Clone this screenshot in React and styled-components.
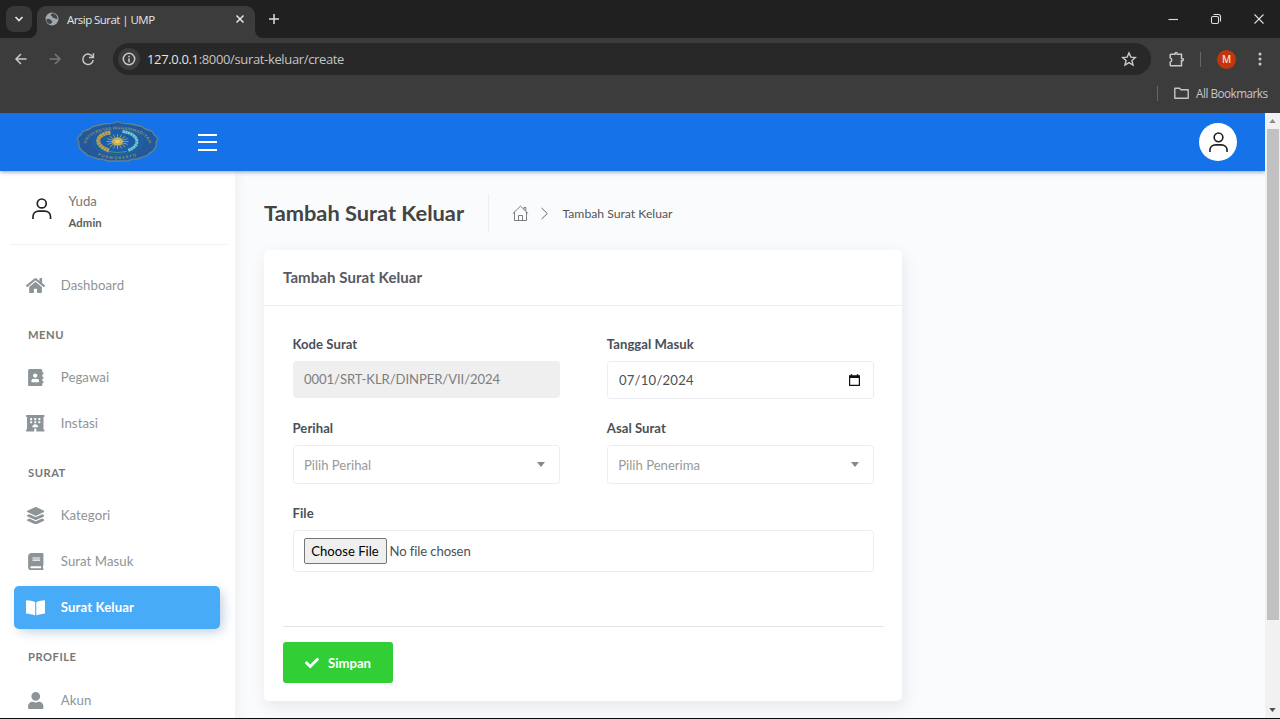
import React from 'react';
import styled, { createGlobalStyle, css } from 'styled-components';
import {
  FaHome,
  FaAddressBook,
  FaHotel,
  FaLayerGroup,
  FaBook,
  FaBookOpen,
  FaUser,
  FaCheck,
} from 'react-icons/fa';

const GlobalStyle = createGlobalStyle`
  * { box-sizing: border-box; }
  html, body { margin: 0; padding: 0; overflow: hidden; }
  body { font-family: Lato, "Liberation Sans", sans-serif; font-size: 13px; color: #575962; }
  svg { display: block; flex: none; }
`;

const Screen = styled.div`
  width: 1280px;
  height: 719px;
  display: flex;
  flex-direction: column;
  overflow: hidden;
  background: #3c3c3c;
  border-bottom: 1px solid #0b0c10;
`;

/* ---------- browser chrome ---------- */

const chromeFont = css`
  font-family: "Open Sans", "Noto Sans", sans-serif;
  white-space: nowrap;
`;

const TabStrip = styled.div`
  height: 38px;
  flex: none;
  display: flex;
  background: #3c3c3c;
`;

const StripLeft = styled.div`
  display: flex;
  width: 37px;
  padding: 6px 0 0 6px;
  background: #202020;
  border-bottom-right-radius: 8px;
`;

const TabSearch = styled.button`
  width: 26px;
  height: 26px;
  border: 0;
  padding: 0;
  border-radius: 8px;
  background: #383838;
  color: #e4e4e4;
  display: flex;
  align-items: center;
  justify-content: center;
`;

const TabBack = styled.div`
  background: linear-gradient(#202020 0 24px, #3c3c3c 24px);
`;

const Tab = styled.div`
  width: 218px;
  height: 32px;
  margin-top: 6px;
  padding: 0 9px 6px 8px;
  display: flex;
  align-items: center;
  background: #3c3c3c;
  border-radius: 9px 9px 0 0;
  color: #e6e6e6;
`;

const TabTitle = styled.span`
  ${chromeFont}
  flex: 1;
  margin-left: 8px;
  font-size: 11.5px;
  letter-spacing: -0.55px;
`;

const StripRight = styled.div`
  flex: 1;
  display: flex;
  align-items: center;
  background: #202020;
  border-bottom-left-radius: 8px;
  color: #dedede;
  padding: 0 15px 0 13px;
  justify-content: space-between;
`;

const WindowControls = styled.div`
  display: flex;
  align-items: center;
  gap: 31px;
`;

const Toolbar = styled.div`
  height: 42px;
  flex: none;
  display: flex;
  align-items: center;
  padding: 0 11px 0 13px;
  color: #c9c9c9;
  background: #3c3c3c;
`;

const NavButtons = styled.div`
  display: flex;
  gap: 17.5px;
  width: 100px;
`;

const AddressBar = styled.div`
  width: 1038px;
  height: 32px;
  border-radius: 16px;
  background: #282828;
  display: flex;
  align-items: center;
  padding: 0 14px 0 5px;
`;

const InfoBadge = styled.span`
  width: 22px;
  height: 22px;
  border-radius: 50%;
  background: #3c3c3c;
  display: flex;
  align-items: center;
  justify-content: center;
`;

const Url = styled.span`
  ${chromeFont}
  flex: 1;
  margin-left: 7px;
  font-size: 13px;
  letter-spacing: -0.35px;
  color: #c4c4c4;
  b { font-weight: 400; color: #e4e4e4; }
`;

const VerticalRule = styled.span`
  flex: none;
  width: 1px;
  height: 15px;
  background: #666;
`;

const ToolbarRight = styled.div`
  display: flex;
  align-items: center;
  padding-left: 17px;
  ${VerticalRule} { margin-left: 15px; }
`;

const Profile = styled.span`
  ${chromeFont}
  width: 19px;
  height: 19px;
  margin: 0 22px 0 16px;
  border-radius: 50%;
  background: #c3350c;
  color: #f5ded7;
  font-size: 10px;
  font-weight: 600;
  display: flex;
  align-items: center;
  justify-content: center;
`;

const BookmarksBar = styled.div`
  ${chromeFont}
  height: 33px;
  flex: none;
  display: flex;
  align-items: center;
  justify-content: flex-end;
  padding: 0 12.5px 7px 0;
  color: #c6c6c6;
  font-size: 11.7px;
  letter-spacing: -0.5px;
`;

const BookmarkFolder = styled.div`
  display: flex;
  align-items: center;
  gap: 7.5px;
  margin-left: 15.5px;
`;

/* ---------- application ---------- */

const Viewport = styled.div`
  flex: 1;
  display: flex;
  min-height: 0;
`;

const Page = styled.div`
  flex: 1;
  display: flex;
  flex-direction: column;
  background: #f9fbfd;
  overflow: hidden;
`;

const Header = styled.header`
  position: relative;
  z-index: 2;
  height: 58px;
  flex: none;
  display: flex;
  align-items: center;
  background: #1572e8;
  box-shadow: 0 1px 4px rgba(21, 60, 120, 0.5);
  padding: 0 28px 0 76px;
`;

const MenuToggle = styled.button`
  display: flex;
  flex-direction: column;
  gap: 5.5px;
  border: 0;
  padding: 0;
  margin: 0 auto 0 39px;
  background: none;
  span { width: 19px; height: 2px; background: #fff; }
`;

const Avatar = styled.div`
  width: 38px;
  height: 38px;
  border-radius: 50%;
  background: #fff;
  display: flex;
  align-items: center;
  justify-content: center;
`;

const Columns = styled.div`
  flex: 1;
  display: flex;
  min-height: 0;
`;

const Sidebar = styled.aside`
  width: 235px;
  flex: none;
  background: #fff;
  box-shadow: 4px 4px 10px rgba(69, 65, 78, 0.06);
  overflow: hidden;
  position: relative;
`;

const UserBox = styled.div`
  display: flex;
  align-items: center;
  height: 74px;
  margin: 0 8px 0 10px;
  padding: 2px 0 0 22px;
  border-bottom: 1px solid #f1f1f1;
`;

const UserText = styled.div`
  display: flex;
  flex-direction: column;
  margin-left: 17px;
  line-height: 22px;
  font-size: 13.2px;
  color: #777;
  padding-top: 6px;
  strong { font-size: 11.3px; font-weight: 700; color: #5c5c5c; letter-spacing: 0.1px; }
`;

const Nav = styled.nav`
  padding: 19px 15px 0 14px;
`;

const SectionTitle = styled.div`
  height: ${(p) => p.$height || 49}px;
  padding: 5px 0 0 14px;
  display: flex;
  align-items: center;
  font-size: 11.2px;
  font-weight: 700;
  letter-spacing: 0.5px;
  color: #777;
`;

const NavItem = styled.a`
  height: 43px;
  display: flex;
  align-items: center;
  padding: 0 0 0 11px;
  border-radius: 5px;
  font-size: 13.2px;
  line-height: 17px;
  color: ${(p) => (p.$active ? '#fff' : '#8d9498')};
  font-weight: ${(p) => (p.$active ? 700 : 400)};
  letter-spacing: ${(p) => (p.$active ? 0.1 : 0.06)}px;
  background: ${(p) => (p.$active ? '#48abf7' : 'transparent')};
  box-shadow: ${(p) => (p.$active ? '4px 4px 10px rgba(0,0,0,.08), 4px 4px 15px -5px rgba(21,114,232,.3)' : 'none')};
  & + & { margin-top: 3px; }
`;

const NavIcon = styled.span`
  width: 21px;
  margin-right: 14.8px;
  display: flex;
  justify-content: center;
`;

const Main = styled.main`
  flex: 1;
  padding: 23px 0 0 29px;
`;

const TitleRow = styled.div`
  display: flex;
  align-items: center;
  height: 38px;
`;

const PageTitle = styled.h1`
  margin: 0;
  width: 224.5px;
  height: 38px;
  line-height: 38px;
  border-right: 1px solid #eceff2;
  font-size: 21.8px;
  font-weight: 700;
  color: #444;
  white-space: nowrap;
`;

const Crumbs = styled.div`
  display: flex;
  align-items: center;
  padding: 1px 0 0 23px;
  font-size: 12.2px;
  color: #555;
  svg + svg { margin-left: 12.5px; }
  span { margin-left: 14.5px; }
`;

const Card = styled.section`
  width: 638px;
  height: 451px;
  margin-top: 18px;
  border-radius: 5px;
  background: #fff;
  box-shadow: 2px 6px 15px rgba(69, 65, 78, 0.1);
`;

const CardHeader = styled.div`
  height: 56px;
  padding: 0 19px;
  border-bottom: 1px solid #ebecec;
  line-height: 54px;
  font-size: 15px;
  font-weight: 700;
  letter-spacing: 0.08px;
  color: #575962;
`;

const Fields = styled.div`
  height: 321px;
  margin: 0 18px 0 19px;
  padding: 28px 10px 0 9.5px;
  border-bottom: 1px solid #e4e5e6;
  display: grid;
  grid-template-columns: 267px 267px;
  column-gap: 47.3px;
  grid-auto-rows: 84.4px;
  align-items: start;
`;

const Field = styled.div`
  grid-column: ${(p) => (p.$wide ? '1 / -1' : 'auto')};
`;

const Label = styled.label`
  display: block;
  height: 27px;
  line-height: 21px;
  font-size: 13.1px;
  font-weight: 700;
  letter-spacing: 0.05px;
  color: #495057;
`;

const Control = styled.div`
  height: ${(p) => p.$height || 38}px;
  padding: 0 ${(p) => (p.$placeholder ? 14 : 13)}px 0 10.5px;
  display: flex;
  align-items: center;
  justify-content: ${(p) => (p.$packed ? 'flex-start' : 'space-between')};
  border: 1px solid ${(p) => (p.$disabled ? '#efefef' : '#ebedf2')};
  border-radius: 3.5px;
  background: ${(p) => (p.$disabled ? '#efefef' : '#fff')};
  color: ${(p) => (p.$disabled ? '#7e7e7e' : p.$placeholder ? '#999' : '#495057')};
  font-size: 13.1px;
  letter-spacing: ${(p) => (p.$disabled ? -0.08 : p.$packed ? -0.1 : 0)}px;
`;

const DateText = styled.span`
  padding: 0 0 0 0.7px;
  letter-spacing: 0.22px;
`;

const ChooseFile = styled.button`
  width: 83px;
  height: 26px;
  padding: 0;
  margin: 0 3px 0 -0.5px;
  border: 1px solid #767676;
  border-radius: 2px;
  background: #efefef;
  font: 400 13.1px Lato, sans-serif;
  color: #000;
`;

const SaveButton = styled.button`
  display: flex;
  align-items: center;
  justify-content: center;
  gap: 9px;
  width: 110px;
  height: 41px;
  margin: 15px 0 0 19px;
  padding: 0;
  border: 0;
  border-radius: 3px;
  background: #31ce36;
  color: #fff;
  font: 700 13.1px Lato, sans-serif;
`;

const Scrollbar = styled.div`
  width: 15px;
  display: flex;
  flex-direction: column;
  align-items: center;
  background: #f1f1f1;
`;

const ScrollArrow = styled.div`
  height: 16px;
  display: flex;
  align-items: center;
`;

const Thumb = styled.div`
  width: 12px;
  height: 491px;
  margin-left: 1px;
  background: #c1c1c1;
`;

const Spacer = styled.div`
  flex: 1;
`;

/* ---------- drawings ---------- */

const Stroke = ({ w = 16, h = w, sw = 1.6, children }) => (
  <svg width={w} height={h} viewBox={`0 0 ${w} ${h}`} fill="none" stroke="currentColor" strokeWidth={sw}>
    {children}
  </svg>
);

const GlobeIcon = () => (
  <svg width="14" height="14" viewBox="0 0 14 14">
    <circle cx="7" cy="7" r="6.5" fill="#a2a7ac" />
    <path d="M1.200 7.400C2.800 7 5 6.900 5.800 8c.6.8 1.700.8 1.600 1.800-.1 1-1.400 1.100-1.700 2.500C3 12 1.300 10 1.200 7.400zM7.500 1.300c-.9.700-1.900.8-1.700 1.900.2 1 1.300.6 1.600 1.500.3.9.6 1.500 1.600 1.300 1-.2 1.100.9 2.100 1 .6.1 1.100-.1 1.400-.500C12.300 3.700 10.400 1.600 7.500 1.300z" fill="#44474a" />
  </svg>
);

const UserOutline = ({ w, sw = 1.7 }) => (
  <svg width={w} height={w * 1.1} viewBox="0 0 20 22" fill="none" stroke="#222" strokeWidth={sw}>
    <circle cx="10" cy="5.600" r="4.600" />
    <path d="M1 21.500v-2.300c0-3.600 2.600-5.700 6-5.700h6c3.400 0 6 2.100 6 5.700v2.300" />
  </svg>
);

const Logo = () => (
  <svg width="83" height="44" viewBox="0 0 83 44">
    <defs>
      <path id="arcTop" d="M11 30C1 2.500 82 2.500 72 30" />
      <path id="arcBottom" d="M16 32.500C30 41.500 53 41.500 67 32.500" />
    </defs>
    <path
      d="M41.500 1.500Q46 4 54 3.800L66 6.500Q68 9 76.500 11.500L78 14.500L81.800 18Q79.500 22 80 27L76.500 31.500Q74 32.500 71.500 35.500L61 39Q56 38.800 51 41H32Q27 38.800 22 39L11.500 35.500Q9 32.500 6.500 31.500L3 27Q3.500 22 1.200 18L5 14.500L6.500 11.500Q15 9 17 6.500L29 3.800Q37 4 41.500 1.500z"
      fill="#22599a"
      stroke="#5c8296"
      strokeWidth="1.400"
    />
    <ellipse cx="41.500" cy="21.500" rx="25" ry="13" fill="#1c5da9" stroke="#34699c" strokeWidth=".6" />
    <g fontFamily="Lato, sans-serif" fontWeight="700" fontSize="4" fill="#8b9a80" textAnchor="middle">
      <text letterSpacing=".5"><textPath href="#arcTop" startOffset="50%">UNIVERSITAS MUHAMMADIYAH</textPath></text>
      <text letterSpacing="1.200"><textPath href="#arcBottom" startOffset="50%">PURWOKERTO</textPath></text>
    </g>
    <path d="M34.500 12.500C20 14 17 25 33 30.500" fill="none" stroke="#b9a14f" strokeWidth="4" strokeDasharray="2.600 .3" />
    <path d="M46.500 11.500C63 13.500 66 25.500 52 30.500" fill="none" stroke="#74c8c8" strokeWidth="3" strokeDasharray="2.400 .3" />
    <path d="M32 31.500q9.500 2 19 0" fill="none" stroke="#3d9a86" strokeWidth="1" />
    <g stroke="#8fa27c" strokeWidth="1">
      {Array.from({ length: 16 }, (_, i) => {
        const a = (i * Math.PI) / 8;
        return (
          <line
            key={i}
            x1={41.5}
            y1={21.5}
            x2={41.5 + 11 * Math.cos(a)}
            y2={21.5 + 7.5 * Math.sin(a)}
          />
        );
      })}
    </g>
    <ellipse cx="41.500" cy="21.500" rx="5.500" ry="4" fill="#c4b060" />
    <ellipse cx="41.500" cy="21.500" rx="2.500" ry="1.800" fill="#e5cf5a" />
  </svg>
);

const Caret = ({ color = '#888', w = 8, h = 5, up }) => (
  <svg width={w} height={h} viewBox="0 0 8 5">
    <path d={up ? 'M0 5L4 0l4 5z' : 'M0 0h8L4 5z'} fill={color} />
  </svg>
);

const CalendarIcon = () => (
  <svg width="11" height="12" viewBox="0 0 11 12">
    <path d="M.6 2.200h9.800v9.200H.6z" fill="none" stroke="#111" strokeWidth="1.200" />
    <path d="M0 1.600h11v2.400H0zM1.700.2h1.500v2H1.700zM7.800.2h1.500v2H7.800z" fill="#111" />
  </svg>
);

const nav = [
  { label: 'Dashboard', Icon: FaHome, size: 19 },
  { section: 'MENU' },
  { label: 'Pegawai', Icon: FaAddressBook, size: 17.5 },
  { label: 'Instasi', Icon: FaHotel, size: 18.5 },
  { section: 'SURAT' },
  { label: 'Kategori', Icon: FaLayerGroup, size: 17.5 },
  { label: 'Surat Masuk', Icon: FaBook, size: 17.5 },
  { label: 'Surat Keluar', Icon: FaBookOpen, size: 19.5, active: true },
  { section: 'PROFILE', height: 50 },
  { label: 'Akun', Icon: FaUser, size: 17.5 },
];

function BrowserChrome() {
  return (
    <>
      <TabStrip>
        <StripLeft>
          <TabSearch>
            <Stroke w={10} h={6} sw={1.7}><path d="M1.500 1L5 4.500 8.500 1" /></Stroke>
          </TabSearch>
        </StripLeft>
        <TabBack>
          <Tab>
            <GlobeIcon />
            <TabTitle>Arsip Surat | UMP</TabTitle>
            <Stroke w={12} sw={1.5}><path d="M2.500 2.500l7 7M9.500 2.500l-7 7" /></Stroke>
          </Tab>
        </TabBack>
        <StripRight>
          <Stroke w={12} sw={1.5}><path d="M6 1v10M1 6h10" /></Stroke>
          <WindowControls>
            <Stroke w={12} sw={1.1}><path d="M1.500 6.500h9.500" /></Stroke>
            <Stroke w={12} sw={1.1}>
              <rect x="1.500" y="3.500" width="7" height="7" rx="1.500" />
              <path d="M3.500 1.500h5a2 2 0 0 1 2 2v5" />
            </Stroke>
            <Stroke w={12} sw={1.1}><path d="M1.500 1.500l9 9M10.500 1.500l-9 9" /></Stroke>
          </WindowControls>
        </StripRight>
      </TabStrip>
      <Toolbar>
        <NavButtons>
          <Stroke w={16} sw={1.5}><path d="M13.500 8H3M8 3L3 8l5 5" /></Stroke>
          <Stroke w={16} sw={1.5}><g stroke="#777"><path d="M2.500 8H13M8 3l5 5-5 5" /></g></Stroke>
          <Stroke w={16} sw={1.5}>
            <path d="M12.800 6.200A5.200 5.200 0 1 0 13.200 9" />
            <path d="M13.400 2.200v4.300H9" />
          </Stroke>
        </NavButtons>
        <AddressBar>
          <InfoBadge>
            <Stroke w={14} sw={1.5}>
              <circle cx="7" cy="7" r="5.700" />
              <path d="M7 6.200v4M7 3.800v1.500" />
            </Stroke>
          </InfoBadge>
          <Url><b>127.0.0.1</b>:8000/surat-keluar/create</Url>
          <Stroke w={16} sw={1.4}>
            <path d="M8 1.900l1.850 4.200 4.550.4-3.450 3 1.050 4.500L8 11.600 4 14l1.050-4.500-3.450-3 4.550-.4z" />
          </Stroke>
        </AddressBar>
        <ToolbarRight>
          <Stroke w={17} sw={1.5}>
            <path d="M3 3.300h4v-.6a1.100 1.100 0 0 1 2.200 0v.6h4.300v4.100h.7a1.200 1.200 0 0 1 0 2.400h-.7v4.900H3a.8.8 0 0 1-.8-.8v-2.800a2.200 2.200 0 0 0 0-4.200V4.100A.8.8 0 0 1 3 3.300z" />
          </Stroke>
          <VerticalRule />
          <Profile>M</Profile>
          <svg width="4" height="14" viewBox="0 0 4 14" fill="currentColor">
            <circle cx="2" cy="2" r="1.500" /><circle cx="2" cy="7" r="1.500" /><circle cx="2" cy="12" r="1.500" />
          </svg>
        </ToolbarRight>
      </Toolbar>
      <BookmarksBar>
        <VerticalRule />
        <BookmarkFolder>
          <Stroke w={15} h={12} sw={1.4}>
            <path d="M.8 1.200h4.700L7 2.800h7.200v8.400H.8z" strokeLinejoin="round" />
          </Stroke>
          All Bookmarks
        </BookmarkFolder>
      </BookmarksBar>
    </>
  );
}

export default function App() {
  return (
    <Screen>
      <GlobalStyle />
      <BrowserChrome />
      <Viewport>
        <Page>
          <Header>
            <Logo />
            <MenuToggle aria-label="Menu"><span /><span /><span /></MenuToggle>
            <Avatar><UserOutline w={19} /></Avatar>
          </Header>
          <Columns>
            <Sidebar>
              <UserBox>
                <UserOutline w={19.5} />
                <UserText>Yuda<strong>Admin</strong></UserText>
              </UserBox>
              <Nav>
                {nav.map((n) =>
                  n.section ? (
                    <SectionTitle key={n.section} $height={n.height}>{n.section}</SectionTitle>
                  ) : (
                    <NavItem key={n.label} $active={n.active}>
                      <NavIcon><n.Icon size={n.size} /></NavIcon>
                      {n.label}
                    </NavItem>
                  )
                )}
              </Nav>
            </Sidebar>
            <Main>
              <TitleRow>
                <PageTitle>Tambah Surat Keluar</PageTitle>
                <Crumbs>
                  <Stroke w={17} sw={0.75}>
                    <path d="M.8 8.500L8.500 1.200l7.700 7.300M2.500 7v8.500h12V7M12 4.300V2.500h1.800v3.400M6.500 15.500v-5h4v5" />
                  </Stroke>
                  <Stroke w={7} h={13} sw={0.9}><path d="M.6 1l5.700 5.500L.6 12" /></Stroke>
                  <span>Tambah Surat Keluar</span>
                </Crumbs>
              </TitleRow>
              <Card>
                <CardHeader>Tambah Surat Keluar</CardHeader>
                <Fields>
                  <Field>
                    <Label>Kode Surat</Label>
                    <Control $disabled $height={36.5}>0001/SRT-KLR/DINPER/VII/2024</Control>
                  </Field>
                  <Field>
                    <Label>Tanggal Masuk</Label>
                    <Control><DateText>07/10/2024</DateText><CalendarIcon /></Control>
                  </Field>
                  <Field>
                    <Label>Perihal</Label>
                    <Control $placeholder $height={39}>Pilih Perihal<Caret /></Control>
                  </Field>
                  <Field>
                    <Label>Asal Surat</Label>
                    <Control $placeholder $height={39}>Pilih Penerima<Caret /></Control>
                  </Field>
                  <Field $wide>
                    <Label>File</Label>
                    <Control $height={42} $packed>
                      <ChooseFile>Choose File</ChooseFile>No file chosen
                    </Control>
                  </Field>
                </Fields>
                <SaveButton><FaCheck size={14} />Simpan</SaveButton>
              </Card>
            </Main>
          </Columns>
        </Page>
        <Scrollbar>
          <ScrollArrow><Caret up color="#8a8a8a" w={7} h={4} /></ScrollArrow>
          <Thumb />
          <Spacer />
          <ScrollArrow><Caret color="#505050" w={7} h={4} /></ScrollArrow>
        </Scrollbar>
      </Viewport>
    </Screen>
  );
}
